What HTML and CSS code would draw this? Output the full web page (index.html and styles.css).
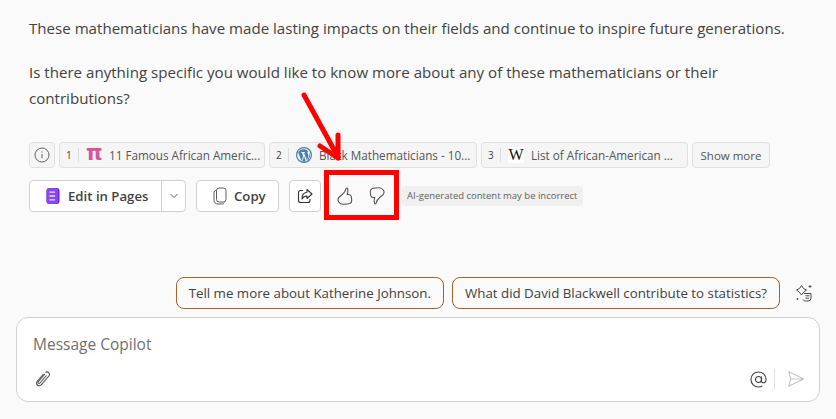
FILE: index.html
```html
<!DOCTYPE html>
<html lang="en">
<head>
<meta charset="utf-8">
<title>Copilot</title>
<link rel="stylesheet" href="styles.css">
</head>
<body>
<main class="page">
  <section class="answer">
    <p class="para">These mathematicians have made lasting impacts on their fields and continue to inspire future generations.</p>
    <p class="para">Is there anything specific you would like to know more about any of these mathematicians or their contributions?</p>
  </section>
  <div class="refs">
    <span class="info chip">
      <svg width="16" height="16" viewBox="0 0 16 16" fill="none" stroke="#616161"><circle cx="8" cy="8" r="7"/><path d="M8 7v4.200M8 4.400v1.200"/></svg>
    </span>
    <span class="chip ref r1"><span class="num">1</span><span class="logo pi">π</span><span class="ref-text">11 Famous African Americ...</span></span>
    <span class="chip ref r2"><span class="num">2</span>
      <svg class="logo-svg" width="16" height="16" viewBox="0 0 16 16"><circle cx="8" cy="8" r="8" fill="#4a7fa8"/><circle cx="8" cy="8" r="6.800" fill="#eef3f7"/><path d="M2.200 5.200 5.400 14l1.700-5-1.100-3.200H5V5h4v.8H8L11 13.600l1-3.400c.5-1.700.3-2.700-.4-3.900-.4-.7-.3-1.600.6-1.900C10 1.400 4.800 1.200 2.200 5.200Z" fill="#4a7fa8"/><path d="M8.100 9.200 6.200 14.600c1.200.4 2.400.3 3.500 0ZM13.500 5.600c.2 1.500-.1 2.700-.6 4l-1.700 4.500c2.500-1.500 3.500-5.800 2.300-8.500Z" fill="#4a7fa8"/></svg>
      <span class="ref-text">Black Mathematicians - 10...</span></span>
    <span class="chip ref r3"><span class="num">3</span><span class="logo wiki">W</span><span class="ref-text">List of African-American ...</span></span>
    <span class="chip more">Show more</span>
  </div>
  <div class="actions">
    <span class="split">
      <span class="btn-main">
        <svg width="14" height="16" viewBox="0 0 14 16"><rect x="0.500" y="0" width="13" height="16" rx="3" fill="#6d28d9"/><rect x="0.500" y="0" width="11.500" height="16" rx="3" fill="#8b45f2"/><path d="M3.500 4.200h5.500M3.500 8h5.500M3.500 11.800h5.500" stroke="#ece2ff" stroke-width="1.300"/></svg>
        Edit in Pages
      </span>
      <span class="btn-caret">
        <svg width="10" height="6" viewBox="0 0 10 6" fill="none" stroke="#616161"><path d="M1.500 1 5 4.500 8.500 1"/></svg>
      </span>
    </span>
    <span class="btn copy">
      <svg width="14" height="18" viewBox="0 0 14 18" fill="none" stroke="#5c5c5c"><rect x="3.500" y="1" width="9.500" height="14" rx="2.500"/><path d="M3.500 3.200C2 3.500 1 4.300 1 6v7c0 2.500 1.500 4 4 4h4c1.200 0 2-.5 2.300-1.500"/></svg>
      Copy
    </span>
    <span class="btn share">
      <svg width="16" height="16" viewBox="0 0 16 16" fill="none" stroke="#333" stroke-width="1.100"><path d="M6 2.500H3.500A2 2 0 0 0 1.500 4.500v8a2 2 0 0 0 2 2h7.500a2 2 0 0 0 2-2V11"/><path d="M10 1.500 15 6l-5 4.500V8C7.500 8 6 9 5 11c0-4 1.500-6.500 5-6.800Z" stroke-linejoin="round"/></svg>
    </span>
    <span class="vote">
      <svg width="16" height="18" viewBox="0 0 16 18" fill="none" stroke="#555" stroke-width="1.100" stroke-linejoin="round"><path d="M10 1c-1 0-1.300.8-1.500 1.800C8.200 4.700 7 6 5.300 7.500L2.300 10c-1.500 1.400-1.600 3.400-.6 5 1 1.400 2.400 2.300 4.300 2.300 2.700 0 5.300-.1 6.700-.7 1.500-.7 2.100-1.900 2-3.300l-.4-3.700c-.2-1.400-1.200-2.100-2.500-2.100h-1.600c.6-1.500.8-3 .5-4.300C10.900 1.900 10.800 1 10 1Z"/></svg>
      <svg width="16" height="18" viewBox="0 0 16 18" fill="none" stroke="#555" stroke-width="1.100" stroke-linejoin="round"><path d="M6 17c1 0 1.300-.8 1.500-1.800.3-1.900 1.500-3.200 3.200-4.700l3-2.500c1.500-1.400 1.600-3.400.6-5C13.300 1.600 11.900.7 10 .7 7.300.7 4.700.8 3.300 1.400 1.800 2.100 1.200 3.300 1.300 4.700l.4 3.700c.2 1.400 1.200 2.100 2.500 2.100h1.600c-.6 1.500-.8 3-.5 4.300.2 1.300.3 2.200.7 2.200Z"/></svg>
    </span>
    <span class="note">AI-generated content may be incorrect</span>
  </div>
  <div class="suggest">
    <span class="pill">Tell me more about Katherine Johnson.</span>
    <span class="pill">What did David Blackwell contribute to statistics?</span>
    <svg class="spark" width="18" height="18" viewBox="0 0 18 18" fill="none" stroke="#4a4a4a" stroke-width="1"><path d="M6.500 1.500 8.500 4.500 11.500 6 9 7.800 6.500 11 4 7.800 1.500 6 4.500 4.500Z" stroke-linejoin="round"/><path d="M9 9.500h7v4.500a3 3 0 0 1-3 3h-2.500c-1 0-2-.5-2.500-1.500M10.500 11.800h4M10.500 14.200h3.500"/><path d="M15 1v3M13.500 2.500h3M2.500 14v2M1.500 15h2" stroke-width=".9"/></svg>
  </div>
  <form class="composer">
    <div class="placeholder">Message Copilot</div>
    <div class="tools">
      <svg width="16" height="16" viewBox="0 0 16 16" fill="none" stroke="#555" stroke-width="1.100"><path d="M10.500 1.500c1-.8 2.300-.7 3.200.2s1 2.300.2 3.300l-7.500 8.700c-1.200 1.300-3 1.300-4 .3s-1-2.700.1-4l6-7M11.500 4.500 5 12c-.5.600-1.200.6-1.600.2s-.4-1.100.1-1.700L10 3"/></svg>
      <span class="tools-right">
        <svg width="17" height="17" viewBox="0 0 18 18" fill="none" stroke="#444" stroke-width="1.200"><circle cx="9" cy="9" r="3.200"/><path d="M12.200 5.800v4.500c0 1.500 1 2.200 2 2.200 1.500 0 2.800-1.500 2.800-3.800C17 4.500 13.500 1 9 1S1 4.500 1 9s3.500 8 8 8c1.500 0 2.800-.3 4-1"/></svg>
        <span class="sep"></span>
        <svg class="send" width="16" height="16" viewBox="0 0 16 16" fill="none" stroke="#c4c4c4" stroke-width="1.100" stroke-linejoin="round"><path d="M.8 .8 15.500 8 .8 15.200 2.800 8ZM2.800 8H15.500"/></svg>
      </span>
    </div>
  </form>
  <svg class="markup" width="836" height="419" viewBox="0 0 836 419" fill="none" stroke="#f00">
    <path d="M304 95 338 157" stroke-width="5" stroke-linecap="round"/>
    <path d="M338 135v23M320 146l18 12" stroke-width="5" stroke-linecap="round"/>
    <rect x="326.500" y="172.500" width="70" height="45" stroke-width="5"/>
  </svg>
</main>
</body>
</html>
```

FILE: styles.css
```css
* { box-sizing: border-box; }
html, body { margin: 0; padding: 0; }
body {
  width: 836px;
  height: 419px;
  overflow: hidden;
  background: #fafafa;
  color: #424242;
  font-family: "Open Sans", "Noto Sans", sans-serif;
}
.page { position: relative; width: 836px; height: 419px; padding: 15px 16px 0; }
.answer { padding-left: 13px; }
.para { margin: 0 0 18px; font-size: 15.100px; line-height: 26px; color: #424242; width: 770px; }
.refs { display: flex; gap: 4px; margin: 31px 0 0 13px; height: 26px; }
.chip {
  display: flex; align-items: center; height: 26px;
  border: 1px solid #e0e0e0; border-radius: 4px; background: #f5f5f5;
  font-size: 11.700px; color: #555;
}
.info { width: 26px; justify-content: center; }
.ref { width: 207px; padding-left: 6px; }
.num { font-size: 10px; color: #424242; width: 13px; height: 14px; line-height: 14px; border-right: 1px solid #dcdcdc; margin-right: 7px; }
.logo { width: 16px; text-align: center; }
.pi { font-family: "DejaVu Sans", sans-serif; font-size: 21px; line-height: 22px; font-weight: 700; color: #d9559a; margin-top: -4px; }
.wiki { font-family: "Liberation Serif", serif; font-size: 16px; color: #111; background: #fff; height: 16px; line-height: 16px; }
.ref-text { margin-left: 7px; white-space: nowrap; }
.r1 { width: 206px; }
.r2 { width: 208px; }
.r3 { width: 207px; }
.more { justify-content: center; white-space: nowrap; font-size: 11.500px; width: 78px; }
.actions { display: flex; align-items: center; margin: 12px 0 0 13px; height: 32px; }
.split, .btn {
  display: flex; align-items: center; height: 32px;
  border: 1px solid #d1d1d1; border-radius: 4px; background: #fff;
}
.split { width: 157px; margin-right: 10px; }
.btn-main { display: flex; align-items: center; gap: 8px; width: 132px; height: 30px; padding-left: 16px; border-right: 1px solid #d1d1d1; font-size: 13.200px; font-weight: 600; color: #424242; }
.btn-caret { display: flex; flex: 1; justify-content: center; }
.copy { width: 83px; gap: 7px; padding-left: 16px; font-size: 13.200px; font-weight: 600; margin-right: 10px; }
.share { width: 32px; justify-content: center; }
.vote { display: flex; align-items: center; gap: 16px; margin-left: 16px; }
.note { margin-left: 16px; padding: 0 6px; height: 20px; line-height: 20px; border-radius: 3px; background: #f0f0f0; font-size: 9.500px; color: #616161; }
.suggest { display: flex; justify-content: flex-end; align-items: center; gap: 8px; margin-top: 65px; height: 32px; }
.pill { display: flex; align-items: center; height: 32px; padding: 0 12px; border: 1px solid #a5622a; border-radius: 8px; font-size: 13.300px; color: #424242; }
.spark { margin: 0 7px 0 7px; }
.composer { margin-top: 8px; width: 804px; height: 85px; border: 1px solid #d1d1d1; border-radius: 12px; background: #fff; padding: 14px 16px 0; }
.placeholder { font-size: 15.500px; line-height: 24px; color: #707070; }
.tools { display: flex; justify-content: space-between; align-items: center; margin-top: 11px; padding-left: 2px; height: 24px; }
.tools-right { display: flex; align-items: center; gap: 7px; margin-right: -1px; }
.send { margin-left: 6px; }
.sep { width: 1px; height: 20px; background: #e0e0e0; }
.markup { position: absolute; left: 0; top: 0; pointer-events: none; }
```
